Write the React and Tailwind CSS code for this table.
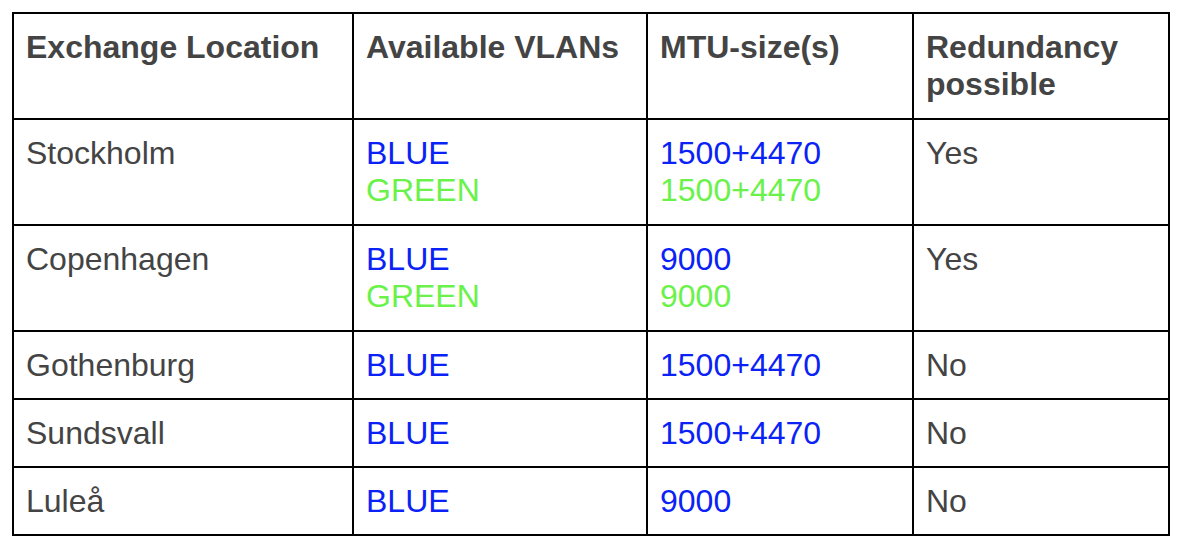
import React from "react";

const BLUE = "text-[#0a22f6]";
const GREEN = "text-[#6af24a]";

const rows = [
  {
    place: "Stockholm",
    h: "h-[106px]",
    vlans: [["BLUE", BLUE], ["GREEN", GREEN]],
    mtu: [["1500+4470", BLUE], ["1500+4470", GREEN]],
    red: "Yes",
  },
  {
    place: "Copenhagen",
    h: "h-[106px]",
    vlans: [["BLUE", BLUE], ["GREEN", GREEN]],
    mtu: [["9000", BLUE], ["9000", GREEN]],
    red: "Yes",
  },
  { place: "Gothenburg", h: "h-[68px]", vlans: [["BLUE", BLUE]], mtu: [["1500+4470", BLUE]], red: "No" },
  { place: "Sundsvall", h: "h-[68px]", vlans: [["BLUE", BLUE]], mtu: [["1500+4470", BLUE]], red: "No" },
  { place: "Luleå", h: "h-[68px]", vlans: [["BLUE", BLUE]], mtu: [["9000", BLUE]], red: "No" },
];

const Cell = ({ h, children, className = "" }) => (
  <div className={`${h} border-r-2 border-b-2 border-black pl-[12px] pt-[15px] ${className}`}>{children}</div>
);

export default function App() {
  return (
    <div className="min-h-[552px] bg-white p-[12px] font-['Liberation_Sans',Arial,sans-serif] text-[32px] leading-[37px] text-[#444444]">
      <div className="grid w-fit grid-cols-[340px_294px_266px_256px] border-l-2 border-t-2 border-black">
        {/* header */}
        <Cell h="h-[106px]" className="font-bold">Exchange Location</Cell>
        <Cell h="h-[106px]" className="font-bold">Available VLANs</Cell>
        <Cell h="h-[106px]" className="font-bold">MTU-size(s)</Cell>
        <Cell h="h-[106px]" className="font-bold">
          Redundancy
          <br />
          possible
        </Cell>

        {rows.map((r) => (
          <React.Fragment key={r.place}>
            <Cell h={r.h}>{r.place}</Cell>
            <Cell h={r.h}>
              {r.vlans.map(([t, c], i) => (
                <div key={i} className={c}>{t}</div>
              ))}
            </Cell>
            <Cell h={r.h}>
              {r.mtu.map(([t, c], i) => (
                <div key={i} className={c}>{t}</div>
              ))}
            </Cell>
            <Cell h={r.h}>{r.red}</Cell>
          </React.Fragment>
        ))}
      </div>
    </div>
  );
}
